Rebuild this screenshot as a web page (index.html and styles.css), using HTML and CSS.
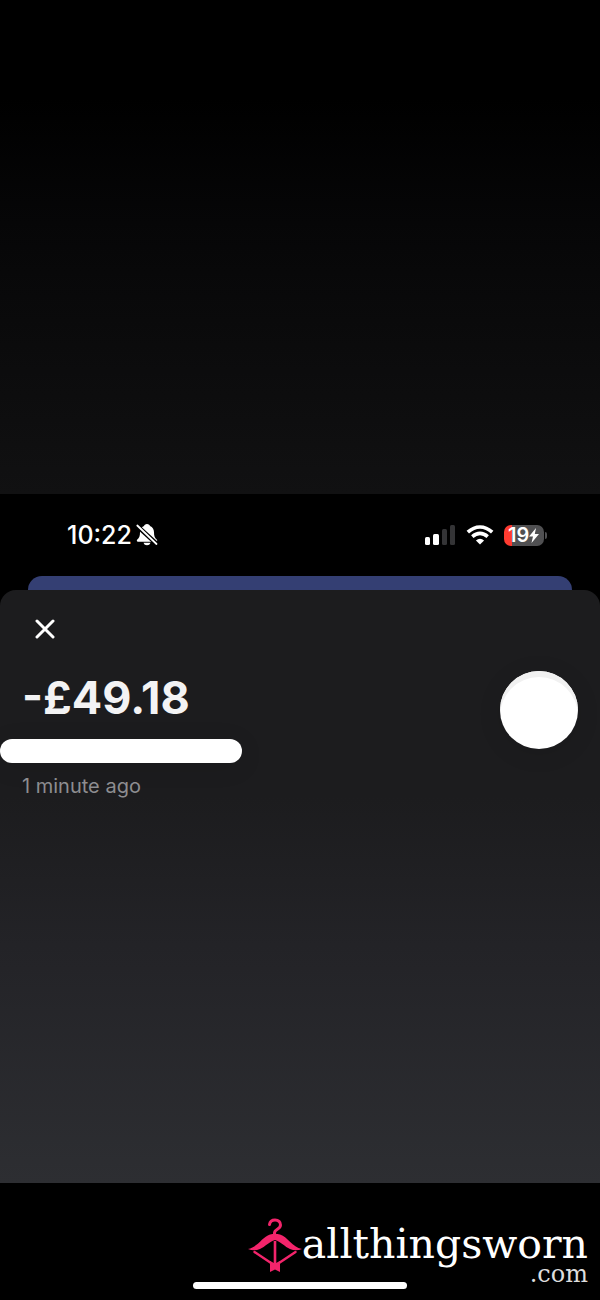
FILE: index.html
```html
<!DOCTYPE html>
<html lang="en">
<head>
<meta charset="utf-8">
<meta name="viewport" content="width=device-width, initial-scale=1">
<title>Transaction</title>
<link rel="stylesheet" href="styles.css">
</head>
<body>
<div class="backdrop"></div>
<header class="status">
  <div class="status-left">
    <time class="clock">10:22</time>
    <svg class="bell" viewBox="0 0 22 22" role="img" aria-label="Silent">
      <path fill="#fff" d="M11 0C9.300 0 8.300 1 8 2 5.300 3 4 5.300 4 8.200c0 4-.8 5.700-2.700 7.300-.9.800-.5 2.200.7 2.200h18c1.200 0 1.600-1.400.7-2.200C18.800 13.900 18 12.200 18 8.200 18 5.300 16.700 3 14 2 13.700 1 12.700 0 11 0zM7.500 18.800c.5 1.700 1.800 2.500 3.500 2.500s3-.8 3.500-2.500z"/>
      <path stroke="#000" stroke-width="4.600" d="M0 1l22 20"/>
      <path stroke="#fff" stroke-width="1.800" stroke-linecap="round" d="M1.300 1.500l19.200 18.500"/>
    </svg>
  </div>
  <div class="status-right">
    <svg class="signal" viewBox="0 0 31 20" role="img" aria-label="Signal">
      <g fill="#fff"><rect y="12" width="5" height="8" rx="1.500"/><rect x="8" y="9" width="6" height="11" rx="1.500"/></g>
      <g fill="#343436"><rect x="17" y="4" width="5" height="16" rx="1.500"/><rect x="25" width="5" height="20" rx="1.500"/></g>
    </svg>
    <svg class="wifi" viewBox="0 0 28 20" role="img" aria-label="Wi-Fi">
      <g fill="none" stroke="#fff" stroke-width="3.600"><path d="M1.800 7.200Q7.500 2 14 2t12.200 5.200"/><path d="M6.300 11.600Q10 8.400 14 8.400t7.700 3.200"/></g>
      <path fill="#fff" d="M14 19.500l-4.100-4Q14 12 18.100 15.500z"/>
    </svg>
    <div class="battery">
      <span class="level">19</span>
      <svg class="bolt" viewBox="0 0 10 15" aria-hidden="true"><path fill="#fff" d="M7 0L0 8.500h4L2.500 15 10 6H5.800z"/></svg>
    </div>
  </div>
</header>
<div class="previous-card"></div>
<main class="sheet">
  <div class="sheet-content">
    <button class="close" type="button" aria-label="Close">
      <svg viewBox="0 0 20 20" aria-hidden="true"><path stroke="#fff" stroke-width="3" stroke-linecap="round" d="M2 2l16 16M18 2L2 18"/></svg>
    </button>
    <section class="summary">
      <div>
        <h1 class="amount">-£49.18</h1>
        <div class="merchant"></div>
        <p class="when">1 minute ago</p>
      </div>
      <div class="avatar"></div>
    </section>
  </div>
</main>
<footer class="footer">
  <a class="brand" href="#">
    <svg class="mark" viewBox="0 0 54 54" aria-hidden="true">
      <g fill="none" stroke="#f3246b">
        <path stroke-width="3" stroke-linecap="round" d="M21.500 6.500C22 3.500 24 2 27 2c3.500 0 5.500 2.200 5.500 5 0 4.500-6 4-6 8v2"/>
        <path stroke-width="2.600" d="M27 23v23"/>
        <path stroke-width="2.400" stroke-linecap="round" d="M6.500 34L23 45M47.500 34L31 45"/>
      </g>
      <path fill="#f3246b" d="M0 31C10 29 14 19 22 16.500q5-1.500 10 0C40 19 44 29 54 31c-4 1.700-8 1.800-12 0-5-2.200-9.500-7.500-15-9-5.500 1.500-10 6.800-15 9-4 1.800-8 1.700-12 0zM22 43l5 2.500 5-2.500v11l-5-2.500-5 2.500z"/>
    </svg>
    <span class="wordmark"><span class="name">allthingsworn</span><span class="domain">.com</span></span>
  </a>
  <div class="home-indicator"></div>
</footer>
</body>
</html>
```
FILE: styles.css
```css
* { box-sizing: border-box; }
body {
  margin: 0;
  min-height: 100vh;
  display: flex;
  flex-direction: column;
  background: #000;
  color: #fff;
  font-family: Inter, "Liberation Sans", sans-serif;
}
.backdrop {
  flex: 494 0 0;
  background: linear-gradient(#000 20%, #060607 45%, #111112);
}
.status {
  height: 82px;
  padding: 0 56px 0 67px;
  display: flex;
  align-items: center;
  justify-content: space-between;
}
.status-left, .status-right { display: flex; align-items: center; }
.status-left { gap: 4px; }
.status-right { gap: 10px; }
.clock { font-size: 25px; font-weight: 500; line-height: 30px; }
.bell { width: 22px; height: 22px; }
.signal { width: 31px; height: 20px; }
.wifi { width: 28px; height: 20px; }
.battery {
  position: relative;
  width: 40px;
  height: 21px;
  padding-left: 4px;
  display: flex;
  align-items: center;
  border-radius: 7px;
  background: linear-gradient(90deg, #ff3b30 8px, #505052 8px);
}
.battery::after {
  content: "";
  position: absolute;
  right: -3px;
  top: 7px;
  width: 2px;
  height: 7px;
  border-radius: 0 2px 2px 0;
  background: #505052;
}
.level { font-size: 20px; font-weight: 600; line-height: 20px; }
.bolt { width: 10px; height: 15px; }
.previous-card {
  height: 28px;
  margin: 0 28px -14px;
  border-radius: 14px 14px 0 0;
  background: #343f73;
}
.sheet {
  position: relative;
  flex: 593 0 0;
  border-radius: 16px 16px 0 0;
  background: linear-gradient(#1c1c1e 35%, #232327 60%, #2d2e32);
}
.sheet-content { padding: 23px 22px; }
.close {
  display: block;
  width: 32px;
  height: 32px;
  margin-left: 7px;
  padding: 6px;
  border: 0;
  background: none;
}
.close svg { display: block; width: 20px; height: 20px; }
.summary {
  display: flex;
  align-items: flex-start;
  justify-content: space-between;
  margin-top: 25px;
}
.amount {
  margin: 0;
  color: #f3f3f4;
  font-size: 45px;
  font-weight: 700;
  line-height: 56px;
}
.merchant {
  width: 242px;
  height: 24px;
  margin: 13px 0 0 -22px;
  border-radius: 12px;
  background: #fff;
  box-shadow: 0 4px 24px #0000001a;
}
.when { margin: 11px 0 0; color: #8d8d90; font-size: 20px; line-height: 24px; }
.avatar {
  width: 78px;
  height: 78px;
  margin-top: 1px;
  border-radius: 50%;
  background: #fff;
  box-shadow: inset 0 6px 0 #f1f1f1, 0 4px 24px #0000001a;
}
.footer {
  position: relative;
  height: 117px;
  padding: 35px 12px 0;
  display: flex;
  justify-content: flex-end;
}
.brand {
  display: flex;
  align-items: flex-start;
  color: #fff;
  text-decoration: none;
  font-family: "DejaVu Serif", serif;
}
.mark { width: 54px; height: 54px; }
.wordmark { display: flex; flex-direction: column; align-items: flex-end; }
.name { font-size: 41px; line-height: 52px; }
.domain { color: #ddd; font-size: 24px; line-height: 8px; }
.home-indicator {
  position: absolute;
  bottom: 11px;
  left: 50%;
  width: 214px;
  height: 7px;
  border-radius: 4px;
  background: #fff;
  transform: translateX(-50%);
}
```
